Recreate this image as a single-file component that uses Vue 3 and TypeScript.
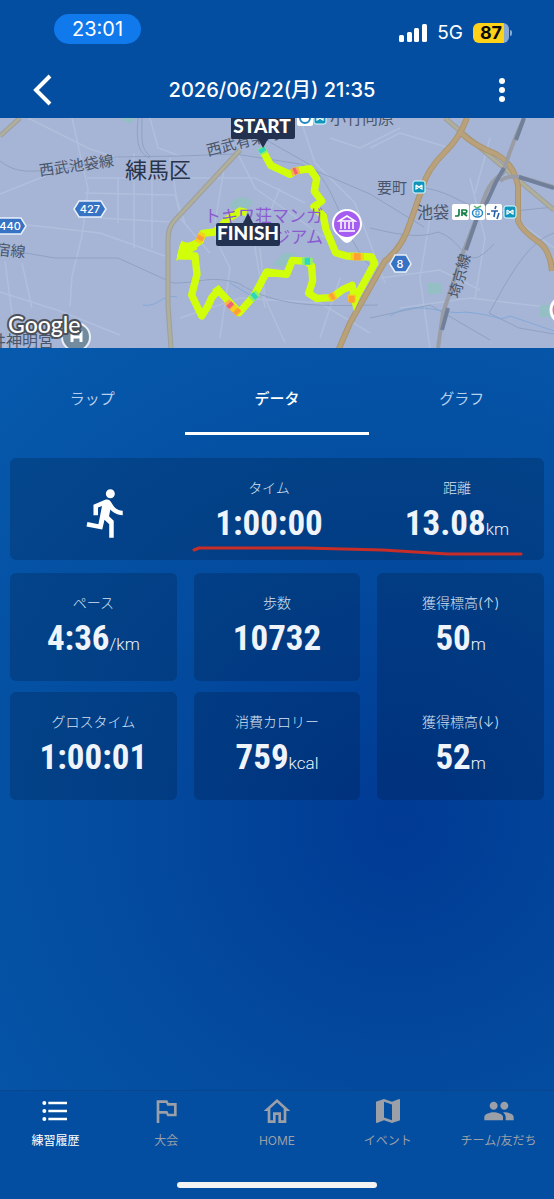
<script setup lang="ts">
import { ref } from 'vue'

interface Stat {
  label: string
  value: string
  unit?: string
}

interface NavItem {
  label: string
  icon: string
}

const tabs: string[] = ['ラップ', 'データ', 'グラフ']
const activeTab = ref<string>('データ')

const summary: Stat[] = [
  { label: 'タイム', value: '1:00:00' },
  { label: '距離', value: '13.08', unit: 'km' },
]

const stats: Stat[] = [
  { label: 'ペース', value: '4:36', unit: '/km' },
  { label: '歩数', value: '10732' },
  { label: 'グロスタイム', value: '1:00:01' },
  { label: '消費カロリー', value: '759', unit: 'kcal' },
]

const elevation: Stat[] = [
  { label: '獲得標高(↑)', value: '50', unit: 'm' },
  { label: '獲得標高(↓)', value: '52', unit: 'm' },
]

const navItems: NavItem[] = [
  {
    label: '練習履歴',
    icon: 'M7 5h14v2H7V5m0 8v-2h14v2H7M4 4.5A1.5 1.5 0 1 1 4 7.5 1.5 1.5 0 1 1 4 4.5m0 6A1.5 1.5 0 1 1 4 13.5 1.5 1.5 0 1 1 4 10.5M7 19v-2h14v2H7m-3-2.5A1.5 1.5 0 1 1 4 19.5 1.5 1.5 0 1 1 4 16.5z',
  },
  { label: '大会', icon: 'M14 6l-1-2H5v17h2v-7h5l1 2h7V6h-6zm4 8h-4l-1-2H7V6h5l1 2h5v6z' },
  {
    label: 'HOME',
    icon: 'M12 5.69l5 4.5V19h-2v-6H9v6H7v-8.81l5-4.5M12 3L2 12h3v9h6v-6h2v6h6v-9h3L12 3z',
  },
  {
    label: 'イベント',
    icon: 'M20.5 3l-.16.03L15 5.1 9 3 3.36 4.9c-.21.07-.36.25-.36.48V20.5c0 .28.22.5.5.5l.16-.03L9 18.9l6 2.1 5.64-1.9c.21-.07.36-.25.36-.48V3.5c0-.28-.22-.5-.5-.5zM15 19l-6-2.11V5l6 2.11V19z',
  },
  {
    label: 'チーム/友だち',
    icon: 'M16 11c1.66 0 2.99-1.34 2.99-3S17.66 5 16 5c-1.66 0-3 1.34-3 3s1.34 3 3 3zm-8 0c1.66 0 2.99-1.34 2.99-3S9.66 5 8 5C6.34 5 5 6.34 5 8s1.34 3 3 3zm0 2c-2.33 0-7 1.17-7 3.5V19h14v-2.5c0-2.33-4.67-3.5-7-3.5zm8 0c-.29 0-.62.02-.97.05 1.16.84 1.97 1.97 1.97 3.45V19h6v-2.5c0-2.33-4.67-3.5-7-3.5z',
  },
]
const activeNav = ref<string>('練習履歴')
</script>

<template>
  <div class="app">
    <div class="status">
      <span class="clock">23:01</span>
      <div class="status-right">
        <svg class="signal" viewBox="0 0 28 20" aria-hidden="true">
          <rect x="0" y="12" width="5" height="7" rx="1.5" />
          <rect x="8" y="9" width="5" height="10" rx="1.5" />
          <rect x="15" y="5" width="5" height="14" rx="1.5" />
          <rect x="23" y="1" width="5" height="18" rx="1.5" />
        </svg>
        <span class="network">5G</span>
        <span class="battery">87</span>
      </div>
    </div>

    <header class="header">
      <button class="icon-button" type="button" aria-label="戻る">
        <svg viewBox="0 0 36 36"><path d="M26 4L12 18 26 32" fill="none" stroke="#fff" stroke-width="4" /></svg>
      </button>
      <h1 class="title">2026/06/22(月) 21:35</h1>
      <button class="icon-button" type="button" aria-label="メニュー">
        <svg viewBox="0 0 36 36" fill="#fff">
          <circle cx="18" cy="9" r="3" /><circle cx="18" cy="18" r="3" /><circle cx="18" cy="27" r="3" />
        </svg>
      </button>
    </header>

    <svg class="map" viewBox="0 0 554 230" preserveAspectRatio="xMidYMid slice" role="img" aria-label="ルートマップ">
      <defs>
        <g id="metro">
          <rect width="12" height="12" rx="2" fill="#1095bd" stroke="#dff" stroke-width="1" />
          <path d="M3 4v4l2-1M9 4v4l-2-1M3 4l6 4M9 4L3 8" fill="none" stroke="#fff" stroke-width="1.2" />
        </g>
      </defs>
      <rect width="554" height="230" fill="#a6b5d5" />

      <!-- minor streets -->
      <g fill="none" stroke="#b0bfdc" stroke-width="1.5">
        <path d="M28 0L90 31 118 40M0 76L45 58 67 44M72 0L88 71 82 118 72 158 70 188M87 60h110M118 60v45M134 35v95M152 45v85M28 107L100 115 165 138M85 75l90 2 10 28M0 174l60 19 60 24M5 143l8 60-8 27M22 145l10 45M100 100l70 4" />
        <path d="M150 0l8 30 22 8M170 40l10 60 30 35M235 30l20 40 70 50M195 60h60l50 25M210 110l20 40-10 70M260 130l5 50 20 45M180 200l60-20 80 5 50 30M300 0l15 45 40 40 30 80M330 20l30 10 40-20M370 30l30-15 50 15M380 160l60-8 40 20M470 60l15 60-10 60M400 190l70-10 84 10M490 20l-15 55M500 90l54 40M430 100l-10 60 10 70M225 45l-10 60M280 70l-25 60 10 60M340 160l-20 60" />
      </g>
      <g fill="none" stroke="#8fa1c3" stroke-width="1">
        <path d="M0 43c20 16 38 8 60 9l55-13 65-1 55-2 65 10 70 30 54 33M25 135l30 5h63l55 25c30 0 35-8 65 0 40 25 80 23 140 22M138 0c-2 25 0 35 12 40M142 0c0 20-2 30 8 38M245 10l62 35c30 20 35 75 65 105M370 110c35 8 50 10 68 4 30 10 25 45 56 12M425 70c30 5 40 20 70 25l59-6M554 115c-30 10-50 55-65 80l30 15 35 6M370 200l60-13 60 35" />
      </g>
      <g fill="none" stroke="#83a9d8" stroke-width="1">
        <path d="M143 187c15 3 20-12 34-8M230 165l20 12M390 198c25-18 55 0 75-4 40 4 30 10 45 4l44 15" />
      </g>
      <g fill="#94bfc4">
        <path d="M229 89c4-12 20-12 24-4l-8 8zM272 147l12-12h12l-6 14zM428 165h14v11h-14zM540 187h12v12h-12zM120 0h16l-7 6z" />
      </g>

      <!-- main roads -->
      <g fill="none" stroke-linejoin="round">
        <path d="M240 32L175 102q-7 7-7 20v65l3 43M20 0L0 18M445 0l109 92" stroke="#9d9f9d" stroke-width="5" />
        <path d="M240 32L175 102q-7 7-7 20v65l3 43M20 0L0 18M445 0l109 92" stroke="#b0af9b" stroke-width="3" />
        <path d="M467 0q-8 21-22 34-18 18-22 34l-13 37q-8 25-25 38l-35 62-12 28M461 15q14 13 35 21 18 10 22 32v35q4 10 22 22 10 8 12 28" stroke="#aa9570" stroke-width="6" />
        <path d="M467 0q-8 21-22 34-18 18-22 34l-13 37q-8 25-25 38l-35 62-12 28M461 15q14 13 35 21 18 10 22 32v35q4 10 22 22 10 8 12 28" stroke="#b9a27b" stroke-width="4" />
      </g>
      <g fill="none">
        <path d="M524 0q-12 25-21 55-12 8-17 20l-23 60-20 60-5 35M500 63q8-6 20-4l34 10" stroke="#9a9da5" stroke-width="4" />
        <path d="M524 0l-8 22M504 50l-8 14-11 24M477 100l-11 32M448 190l-6 22M519 59l35 11" stroke="#71809a" stroke-width="4" />
      </g>

      <!-- place names -->
      <g class="place">
        <text x="40" y="58" font-size="15" transform="rotate(-8 40 58)">西武池袋線</text>
        <text x="208" y="38" font-size="15" transform="rotate(-14 208 38)">西武有楽町</text>
        <text x="125" y="60" font-size="22" fill="#29344a">練馬区</text>
        <text x="330" y="6" font-size="16">小竹向原</text>
        <text x="377" y="75" font-size="15">要町</text>
        <text x="417" y="100" font-size="16">池袋</text>
        <text x="-5" y="137" font-size="15" transform="rotate(6 0 137)">宿線</text>
        <text x="459" y="181" font-size="15" transform="rotate(-75 459 181)">埼京線</text>
        <text x="-10" y="229" font-size="16">井神明宮</text>
      </g>

      <!-- road numbers -->
      <g class="shield">
        <path d="M79 83h22l5 8-5 8H79l-5-8z" /><text x="90" y="95">427</text>
        <path d="M-5 100h26l5 8-5 8H-5z" /><text x="10" y="112">440</text>
        <path d="M395 137h11l5 9-5 8h-11l-5-8z" /><text x="400" y="150">8</text>
      </g>

      <!-- stations -->
      <use href="#metro" x="413" y="63" />
      <use href="#metro" x="504" y="88" />
      <use href="#metro" x="314" y="-6" />
      <rect x="297" y="-8" width="16" height="16" rx="2" fill="#fff" />
      <circle cx="305" cy="0" r="5" fill="none" stroke="#2487c5" stroke-width="2" />
      <g fill="#fff">
        <rect x="452" y="86" width="17" height="16" rx="2" />
        <rect x="470" y="86" width="15" height="16" rx="2" />
        <rect x="486" y="86" width="16" height="16" rx="2" />
      </g>
      <path d="M459 91v5q0 2-2 2h-2M462 98v-6h3q3 0 1 3h-3l4 3" fill="none" stroke="#16804b" stroke-width="1.7" />
      <ellipse cx="477.5" cy="95" rx="5" ry="4" fill="none" stroke="#2487c5" stroke-width="1.5" />
      <path d="M476 93v4h3v-4z" fill="none" stroke="#2487c5" stroke-width="1" />
      <path d="M474 88l3 2 4-2" fill="none" stroke="#56b56a" stroke-width="1.5" />
      <path d="M487 96h3M491 93h7M495 93l-1 6M496 88l-1 3M499 95l-2 6" fill="none" stroke="#285fa9" stroke-width="1.6" />

      <!-- recorded route -->
      <g transform="translate(160 -2) scale(.3333)" fill="none" stroke-linejoin="round">
        <path
          d="M306 100L332 148 362 162 390 175 405 165 450 158 470 188 463 225 485 255 462 272 490 300 498 340 527 410 560 420 635 423 644 442 585 550 576 508 550 520 515 545 470 547 446 532 458 495 455 450 440 436 397 433 380 475 320 468 303 500 282 540 238 590 175 523 155 545 144 570 125 600 95 537 111 475 105 420 62 420 70 390 95 392 120 375 128 352 165 348 205 308 240 285 260 290"
          stroke="#d1ff0b" stroke-width="22"
        />
        <path d="M48 434L58 398 64 374 82 382 105 372 112 400 75 420zM155 522l22-16 12 20zM572 548l10 38 16-36z" fill="#d1ff0b" />
        <g stroke-width="21">
          <path d="M303 95l10 18M426 436h32M272 550l22-20" stroke="#8eee6a" />
          <path d="M394 170l24-8M200 556l24 26" stroke="#f8b246" />
          <path d="M572 422h40M506 547l22-10M114 380l14-30M218 574l20 20M564 546h24" stroke="#f4d21c" />
          <path d="M304 97l6 11M434 436h16M278 544l10-9" stroke="#2fd6c0" />
          <path d="M401 167l9-4M206 563l9 9" stroke="#f0637a" />
          <path d="M582 422h20M512 544l10-5M118 372l6-12M226 582l10 10M566 550h18" stroke="#ff9f35" />
        </g>
      </g>

      <g class="poi" text-anchor="end">
        <text x="323" y="104">トキワ荘マンガ</text>
        <text x="323" y="125">ュージアム</text>
      </g>
      <path d="M347 91c9 0 15 7 15 15 0 8-6 11-10 16q-5 6-10 0c-4-5-10-8-10-16 0-8 6-15 15-15z" fill="#fff" />
      <circle cx="347" cy="106" r="13" fill="#a45df0" />
      <path d="M339 103l8-5 8 5zM339 113h16M341 104v7M345 104v7M349 104v7M353 104v7" fill="none" stroke="#fff" stroke-width="1.5" />

      <path d="M233-4h60q2 0 2 2v21q0 2-2 2h-25l-5 9-5-9h-25q-2 0-2-2V-2q0-2 2-2z" fill="#233150" />
      <path d="M218 105h25l5-10 5 10h25q2 0 2 2v19q0 2-2 2h-60q-2 0-2-2v-19q0-2 2-2z" fill="#233150" />
      <g class="flag"><text x="262" y="15">START</text><text x="248" y="122">FINISH</text></g>

      <circle cx="76" cy="219" r="14" fill="#738b9f" stroke="#e9eff4" stroke-width="2" />
      <path d="M72 213v11M81 213v11M72 219h9" stroke="#fff" stroke-width="3" />
      <circle cx="564" cy="192" r="13" fill="#df6fa9" stroke="#fff" stroke-width="3" />
      <text x="8" y="215" class="google">Google</text>
    </svg>

    <main class="content">
      <div class="tabs" role="tablist">
        <button
          v-for="tab in tabs" :key="tab" type="button" role="tab" class="tab"
          :class="{ active: tab === activeTab }" :aria-selected="tab === activeTab" @click="activeTab = tab"
        >{{ tab }}</button>
      </div>

      <section class="cards">
        <div class="card summary">
          <svg class="runner" viewBox="0 0 24 24" aria-hidden="true">
            <path d="M13.49 5.48c1.1 0 2-.9 2-2s-.9-2-2-2-2 .9-2 2 .9 2 2 2zm-3.6 13.9l1-4.4 2.1 2v6h2v-7.5l-2.1-2 .6-3c1.3 1.5 3.3 2.5 5.5 2.5v-2c-1.9 0-3.5-1-4.3-2.4l-1-1.6c-.4-.6-1-1-1.7-1-.3 0-.5.1-.8.1l-5.2 2.2v4.7h2v-3.4l1.8-.7-1.6 8.1-4.9-1-.4 2 7 1.4z" />
          </svg>
          <div v-for="item in summary" :key="item.label" class="stat">
            <span class="label">{{ item.label }}</span>
            <span class="value">{{ item.value }}<small v-if="item.unit">{{ item.unit }}</small></span>
          </div>
          <svg class="mark" viewBox="0 0 330 10" preserveAspectRatio="none" aria-hidden="true">
            <path d="M2 4L7 2H112L190 4 255 8H328" fill="none" stroke="#c92d27" stroke-width="3" stroke-linecap="round" stroke-linejoin="round" />
          </svg>
        </div>

        <div class="grid">
          <div v-for="item in stats" :key="item.label" class="card stat">
            <span class="label">{{ item.label }}</span>
            <span class="value">{{ item.value }}<small v-if="item.unit">{{ item.unit }}</small></span>
          </div>
          <div class="card elevation">
            <div v-for="item in elevation" :key="item.label" class="stat">
              <span class="label">{{ item.label }}</span>
              <span class="value">{{ item.value }}<small v-if="item.unit">{{ item.unit }}</small></span>
            </div>
          </div>
        </div>
      </section>
    </main>

    <nav class="nav">
      <div class="nav-items">
        <a
          v-for="item in navItems" :key="item.label" href="#" class="nav-item"
          :class="{ active: item.label === activeNav }" @click.prevent="activeNav = item.label"
        >
          <svg viewBox="0 0 24 24" aria-hidden="true"><path :d="item.icon" /></svg>
          <span>{{ item.label }}</span>
        </a>
      </div>
      <div class="home-indicator"></div>
    </nav>
  </div>
</template>

<style>
body {
  background: #034ea0;
}
</style>

<style scoped>
.app {
  display: flex;
  flex-direction: column;
  min-height: 100vh;
  background: #034ea0;
  color: #fff;
  font-family: Inter, "Noto Sans CJK JP", sans-serif;
}

button {
  padding: 0;
  border: 0;
  background: none;
  color: inherit;
  font: inherit;
  cursor: pointer;
}

.status {
  display: flex;
  align-items: flex-start;
  justify-content: space-between;
  height: 60px;
  padding: 14px 45px 0 54px;
  box-sizing: border-box;
}

.clock {
  width: 87px;
  border-radius: 15px;
  background: #1079ec;
  font-size: 20px;
  line-height: 30px;
  text-align: center;
}

.status-right {
  display: flex;
  align-items: center;
  gap: 10px;
  padding-top: 7px;
}

.signal {
  width: 28px;
  height: 20px;
  fill: #fff;
}

.network {
  font-size: 19px;
  line-height: 24px;
}

.battery {
  position: relative;
  width: 36px;
  border-radius: 6px;
  background: linear-gradient(90deg, #ffd21a 87%, #86a9d6 87%);
  color: #0b0b0b;
  font-size: 18px;
  font-weight: 700;
  line-height: 20px;
  text-align: center;
}

.battery::after {
  content: "";
  position: absolute;
  top: 7px;
  right: -3px;
  width: 2px;
  height: 6px;
  border-radius: 0 2px 2px 0;
  background: #86a9d6;
}

.header {
  display: flex;
  align-items: center;
  justify-content: space-between;
  height: 58px;
  padding: 2px 34px 0 24px;
  box-sizing: border-box;
}

.icon-button {
  width: 36px;
  height: 36px;
}

.icon-button svg {
  display: block;
}

.title {
  margin: 0;
  font-size: 20px;
  font-weight: 500;
  line-height: 28px;
}

.map {
  display: block;
  width: 100%;
  height: 230px;
}

.place {
  fill: #4b566b;
  font-family: "Noto Sans CJK JP", sans-serif;
}

.shield path {
  fill: #3673c5;
  stroke: #e7effa;
  stroke-width: 1.5px;
}

.shield text {
  fill: #fff;
  font-size: 11px;
  font-weight: 500;
  text-anchor: middle;
}

.poi {
  fill: #8a5bd0;
  font-family: "Noto Sans CJK JP", sans-serif;
  font-size: 17px;
}

.flag {
  fill: #fff;
  font-family: Lato, sans-serif;
  font-size: 19px;
  font-weight: 900;
  text-anchor: middle;
}

.google {
  fill: #fff;
  stroke: #4c5159;
  stroke-width: 4px;
  stroke-linejoin: round;
  paint-order: stroke;
  font-family: Lato, sans-serif;
  font-size: 23px;
  font-weight: 500;
}

.content {
  flex: 1;
  background: radial-gradient(circle farthest-corner at 72% 64%, #003a94 0%, #034b9e 45%, #065aad 100%);
}

.tabs {
  display: grid;
  grid-template-columns: repeat(3, 1fr);
}

.tab {
  height: 87px;
  padding-top: 14px;
  border-bottom: 3px solid transparent;
  box-sizing: border-box;
  color: #b7d0ee;
  font-size: 15px;
}

.tab.active {
  border-color: #fff;
  color: #fff;
  font-weight: 500;
}

.cards {
  display: flex;
  flex-direction: column;
  gap: 13px;
  padding: 23px 10px;
}

.card {
  border-radius: 6px;
  background: rgba(0, 10, 30, 0.2);
}

.summary {
  position: relative;
  display: grid;
  grid-template-columns: 194fr 130fr 210fr;
  height: 102px;
}

.summary .stat:nth-child(3) {
  padding-left: 36px;
}

.runner {
  width: 54px;
  height: 54px;
  margin: 28px auto 0;
  fill: #fff;
}

.mark {
  position: absolute;
  left: 34%;
  bottom: 4px;
  width: 62%;
  height: 10px;
}

.grid {
  display: grid;
  grid-template-columns: repeat(3, 1fr);
  grid-template-rows: repeat(2, 108px);
  gap: 11px 17px;
}

.elevation {
  display: grid;
  grid-template-rows: repeat(2, 108px);
  gap: 11px;
  grid-column: 3;
  grid-row: 1 / 3;
}

.stat {
  display: flex;
  flex-direction: column;
  align-items: center;
  padding-top: 20px;
  box-sizing: border-box;
}

.label {
  color: #d3e1f2;
  font-size: 14px;
  font-weight: 300;
  line-height: 20px;
}

.value {
  color: #eff3fa;
  font-family: "Roboto Condensed", "Liberation Sans Narrow", Roboto, sans-serif;
  font-size: 35px;
  font-weight: 700;
  line-height: 52px;
}

.value small {
  font-family: Roboto, sans-serif;
  font-size: 17px;
  font-weight: 300;
}

.nav {
  display: flex;
  flex-direction: column;
  justify-content: space-between;
  align-items: center;
  height: 109px;
  padding: 4px 0 11px;
  border-top: 1px solid #0a4690;
  box-sizing: border-box;
}

.nav-items {
  display: grid;
  grid-template-columns: repeat(5, 1fr);
  width: 100%;
}

.nav-item {
  display: flex;
  flex-direction: column;
  align-items: center;
  gap: 5px;
  color: #9a9fa8;
  font-size: 12px;
  line-height: 18px;
  text-decoration: none;
}

.nav-item svg {
  width: 32px;
  height: 32px;
  fill: currentColor;
}

.nav-item.active {
  color: #fff;
}

.home-indicator {
  width: 36%;
  height: 6px;
  border-radius: 3px;
  background: #f3f3f3;
}
</style>
